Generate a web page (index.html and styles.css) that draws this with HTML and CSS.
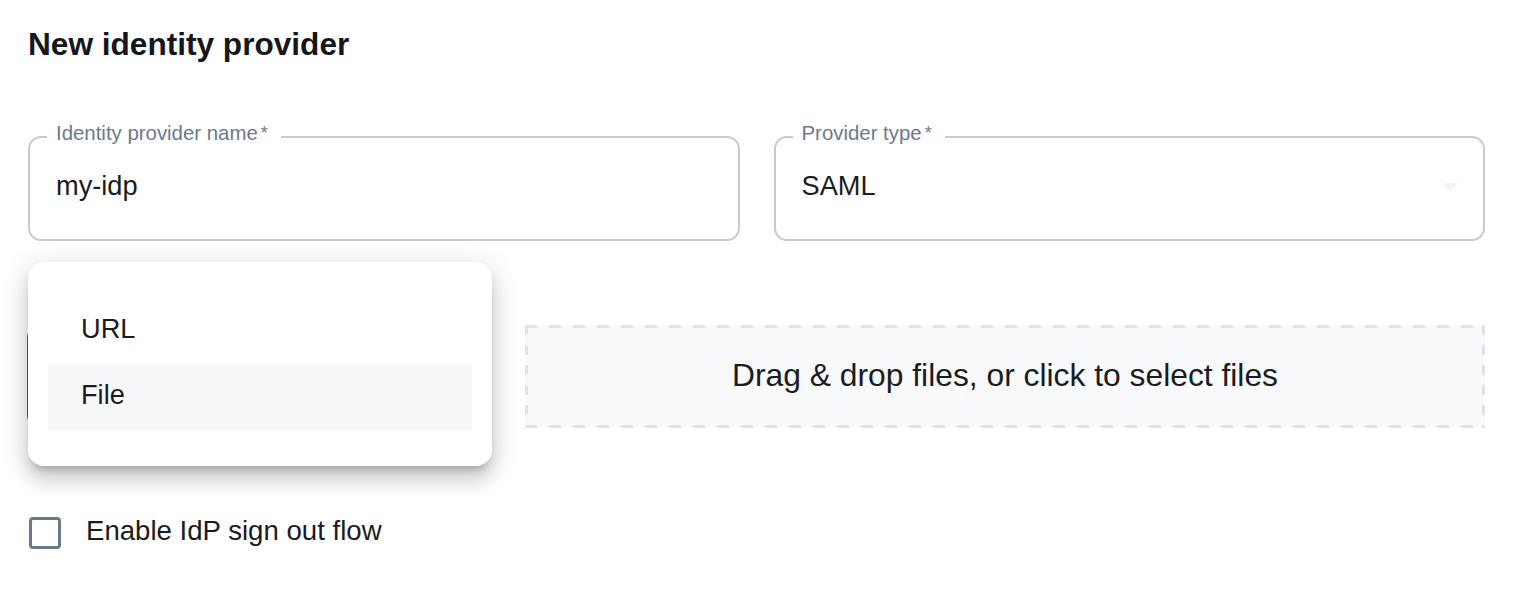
FILE: index.html
```html
<!DOCTYPE html>
<html lang="en">
<head>
<meta charset="utf-8">
<title>New identity provider</title>
<link rel="stylesheet" href="styles.css">
</head>
<body>
<main class="page">
  <h1 class="title">New identity provider</h1>

  <div class="row row-top">
    <div class="field">
      <span class="field-label">Identity provider name<span class="req">*</span></span>
      <span class="field-value">my-idp</span>
    </div>
    <div class="field">
      <span class="field-label">Provider type<span class="req">*</span></span>
      <span class="field-value">SAML</span>
      <span class="arrow"></span>
    </div>
  </div>

  <div class="row row-source">
    <div class="source">
      <div class="source-select"></div>
      <ul class="menu">
        <li class="menu-item">URL</li>
        <li class="menu-item is-active">File</li>
      </ul>
    </div>
    <div class="dropzone">Drag &amp; drop files, or click to select files</div>
  </div>

  <label class="check-row">
    <span class="checkbox"></span>
    <span class="check-label">Enable IdP sign out flow</span>
  </label>
</main>
</body>
</html>
```

FILE: styles.css
```css
* { box-sizing: border-box; }

html, body {
  margin: 0;
  background: #ffffff;
}

body {
  font-family: "Liberation Sans", Arial, Helvetica, sans-serif;
  color: #1b1c20;
}

.page {
  padding: 26px 35px 0 28px;
}

.title {
  margin: 0;
  font-size: 31.6px;
  line-height: 36px;
  font-weight: 700;
  color: #15171c;
}

.row {
  display: grid;
  gap: 34px;
}

.row-top {
  margin-top: 74px;
  grid-template-columns: 1fr 1fr;
}

.field {
  position: relative;
  height: 105px;
  border: 2px solid #cacaca;
  border-radius: 13px;
  display: flex;
  align-items: center;
  padding: 0 26px 6px;
}

.field-label {
  position: absolute;
  top: -17px;
  left: 17px;
  padding: 0 13px 0 9px;
  background: #ffffff;
  font-size: 20.4px;
  line-height: 24px;
  color: #6c7a8e;
  white-space: nowrap;
}

.req {
  font-size: 18px;
  vertical-align: 1px;
  margin-left: 3px;
}

.field-value {
  font-size: 27.2px;
  color: #1b1c20;
}

.arrow {
  position: absolute;
  right: 25px;
  top: 45px;
  width: 0;
  height: 0;
  border-left: 8px solid transparent;
  border-right: 8px solid transparent;
  border-top: 9px solid #f3f4f7;
}

.row-source {
  margin-top: 84px;
  grid-template-columns: 464px 1fr;
  gap: 33px;
}

.source {
  position: relative;
  height: 103px;
}

.source-select {
  height: 100%;
  margin-left: -1px;
  border: 2px solid #5a4bc8;
  border-radius: 13px;
}

.menu {
  position: absolute;
  top: -63px;
  left: 0;
  width: 464px;
  margin: 0;
  padding: 36px 20px;
  list-style: none;
  background: #ffffff;
  border-radius: 16px;
  box-shadow:
    0 8px 8px -5px rgba(0, 0, 0, 0.22),
    0 14px 18px 2px rgba(0, 0, 0, 0.12),
    0 5px 26px 4px rgba(0, 0, 0, 0.1);
}

.menu-item {
  height: 66px;
  display: flex;
  align-items: center;
  padding: 0 33px 4px;
  font-size: 27.2px;
  color: #1b1c20;
}

.menu-item.is-active {
  background: #f7f8fa;
}

.dropzone {
  height: 103px;
  background:
    repeating-linear-gradient(90deg, #e1e3e8 0 12px, transparent 12px 24px) left top / 100% 3px no-repeat,
    repeating-linear-gradient(90deg, #e1e3e8 0 12px, transparent 12px 24px) left bottom / 100% 3px no-repeat,
    repeating-linear-gradient(180deg, #e1e3e8 0 10px, transparent 10px 20px) left top / 3px 100% no-repeat,
    repeating-linear-gradient(180deg, #e1e3e8 0 10px, transparent 10px 20px) right top / 3px 100% no-repeat,
    #f8f9fb;
  display: flex;
  align-items: center;
  justify-content: center;
  padding-bottom: 2px;
  font-size: 31.8px;
  color: #1b1c20;
}

.check-row {
  margin-top: 87px;
  display: flex;
  align-items: center;
  gap: 25px;
}

.checkbox {
  width: 32px;
  height: 32px;
  margin-left: 1px;
  border: 3px solid #6b798b;
  border-radius: 4px;
  flex: none;
}

.check-label {
  font-size: 27.6px;
  line-height: 32px;
  padding-bottom: 3px;
  color: #1b1c20;
}
```
